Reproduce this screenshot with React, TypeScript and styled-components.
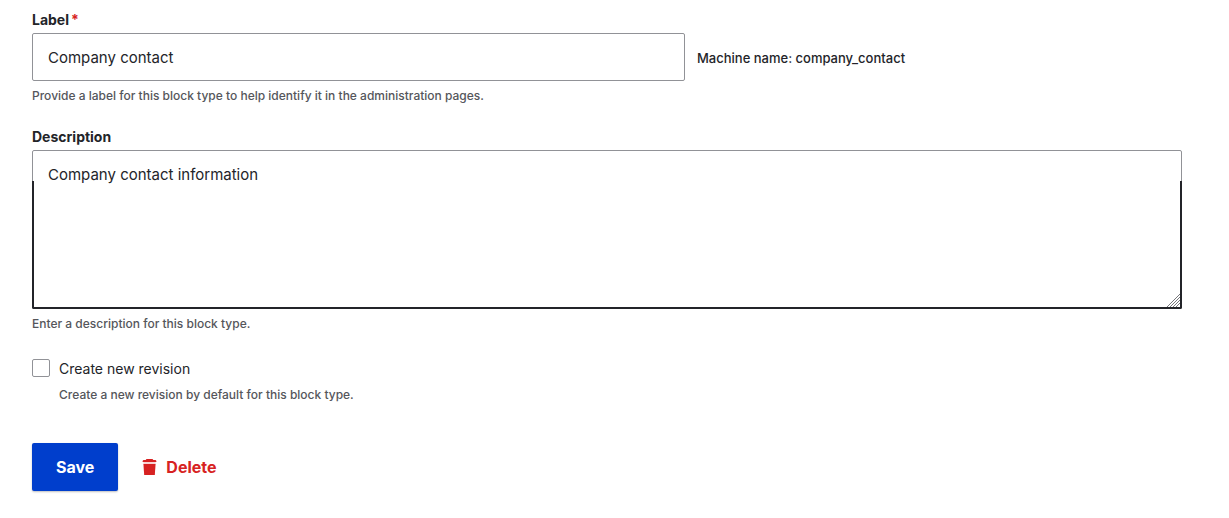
import React, { useState } from "react";
import styled, { createGlobalStyle } from "styled-components";

const ink = "#232429";
const muted = "#55565b";
const line = "#919297";
const danger = "#d72222";

const GlobalStyle = createGlobalStyle`
  *, *::before, *::after { box-sizing: border-box; }
  body {
    margin: 0;
    background: #fff;
    color: ${ink};
    font-family: Inter, "Liberation Sans", sans-serif;
    font-size: 16px;
    line-height: 24px;
  }
`;

const Form = styled.form`
  padding: 10px 47px 24px 32px;
`;

const Field = styled.div`
  margin-bottom: 21px;
`;

const Label = styled.label`
  display: block;
  width: fit-content;
  margin-bottom: 3px;
  font-size: 14px;
  font-weight: 700;
  line-height: 20px;
`;

const Required = styled.span`
  margin-left: 2px;
  color: ${danger};
`;

const InputRow = styled.div`
  display: flex;
  align-items: center;
  gap: 12px;
`;

const TextInput = styled.input`
  flex: 0 1 653px;
  min-width: 0;
  height: 48px;
  padding: 0 15px;
  border: 1px solid ${line};
  border-radius: 2px;
  background: #fff;
  color: ${ink};
  font: inherit;
  font-size: 15px;
`;

const MachineName = styled.span`
  padding-top: 2px;
  font-size: 13px;
  font-weight: 500;
  line-height: 20px;
`;

const Help = styled.div`
  margin-top: 5px;
  color: ${muted};
  font-size: 12px;
  font-weight: 500;
  line-height: 20px;
`;

const TextAreaFrame = styled.div`
  position: relative;

  &::after {
    content: "";
    position: absolute;
    inset: 31px 0 0;
    border: 2px solid ${ink};
    border-top: 0;
    border-radius: 0 0 2px 2px;
    pointer-events: none;
  }
`;

const TextArea = styled.textarea`
  display: block;
  width: 100%;
  height: 159px;
  padding: 12px 15px;
  border: 1px solid ${line};
  border-radius: 2px;
  outline: 0;
  background: #fff;
  color: ${ink};
  font: inherit;
  font-size: 15px;
  resize: none;
`;

const Grip = styled.svg`
  position: absolute;
  right: 1px;
  bottom: 1px;
`;

const CheckField = styled.div`
  display: grid;
  grid-template-columns: 18px 1fr;
  column-gap: 9px;
  margin-bottom: 38px;
  padding-top: 4px;
`;

const Checkbox = styled.input`
  appearance: none;
  width: 18px;
  height: 18px;
  margin: 0;
  border: 1px solid ${line};
  border-radius: 2px;
  background: #fff;

  &:checked {
    border-color: #003ecc;
    background: #003ecc;
    box-shadow: inset 0 0 0 3px #fff;
  }
`;

const CheckLabel = styled.label`
  font-size: 14px;
  line-height: 20px;
`;

const CheckHelp = styled(Help)`
  grid-column: 2;
  margin-top: 6px;
`;

const Actions = styled.div`
  display: flex;
  align-items: center;
  gap: 24px;
`;

const SaveButton = styled.button`
  height: 48px;
  padding: 0 24px;
  border: 0;
  border-radius: 2px;
  background: #003ecc;
  box-shadow: 0 1px 2px rgba(0, 0, 0, 0.25);
  color: #fff;
  font: inherit;
  font-weight: 700;
  cursor: pointer;
`;

const DeleteLink = styled.a`
  display: flex;
  align-items: center;
  gap: 8px;
  color: ${danger};
  font-weight: 700;
  text-decoration: none;
`;

function TrashIcon() {
  return (
    <svg width="16" height="16" viewBox="0 0 16 16" aria-hidden="true">
      <path d="M4.5 0h6l.8 1H13q1.4 0 1.4 1.4V3H.6V2.400Q.6 1 2 1h1.700z" fill={danger} />
      <path d="M1.400 5h12.200l-.8 11H2.200z" fill={danger} />
      <path d="M1.400 3h12.200v2H1.400z" fill={danger} opacity="0.2" />
    </svg>
  );
}

export default function App() {
  const [label, setLabel] = useState("Company contact");
  const [description, setDescription] = useState("Company contact information");

  return (
    <>
      <GlobalStyle />
      <Form onSubmit={(e) => e.preventDefault()}>
        <Field>
          <Label htmlFor="label">
            Label<Required>*</Required>
          </Label>
          <InputRow>
            <TextInput
              id="label"
              type="text"
              required
              aria-describedby="label-help"
              value={label}
              onChange={(e) => setLabel(e.target.value)}
            />
            <MachineName>Machine name: company_contact</MachineName>
          </InputRow>
          <Help id="label-help">
            Provide a label for this block type to help identify it in the administration pages.
          </Help>
        </Field>

        <Field>
          <Label htmlFor="description">Description</Label>
          <TextAreaFrame>
            <TextArea
              id="description"
              aria-describedby="description-help"
              value={description}
              onChange={(e) => setDescription(e.target.value)}
            />
            <Grip width="15" height="15" viewBox="0 0 15 15" aria-hidden="true">
              <path
                d="M1 14L14 1M4 14L14 4M7 14L14 7M10 14L14 10"
                stroke="#77787c"
                strokeWidth="1"
                fill="none"
              />
            </Grip>
          </TextAreaFrame>
          <Help id="description-help">Enter a description for this block type.</Help>
        </Field>

        <CheckField>
          <Checkbox id="revision" type="checkbox" aria-describedby="revision-help" />
          <CheckLabel htmlFor="revision">Create new revision</CheckLabel>
          <CheckHelp id="revision-help">
            Create a new revision by default for this block type.
          </CheckHelp>
        </CheckField>

        <Actions>
          <SaveButton type="submit">Save</SaveButton>
          <DeleteLink href="#delete">
            <TrashIcon />
            Delete
          </DeleteLink>
        </Actions>
      </Form>
    </>
  );
}
